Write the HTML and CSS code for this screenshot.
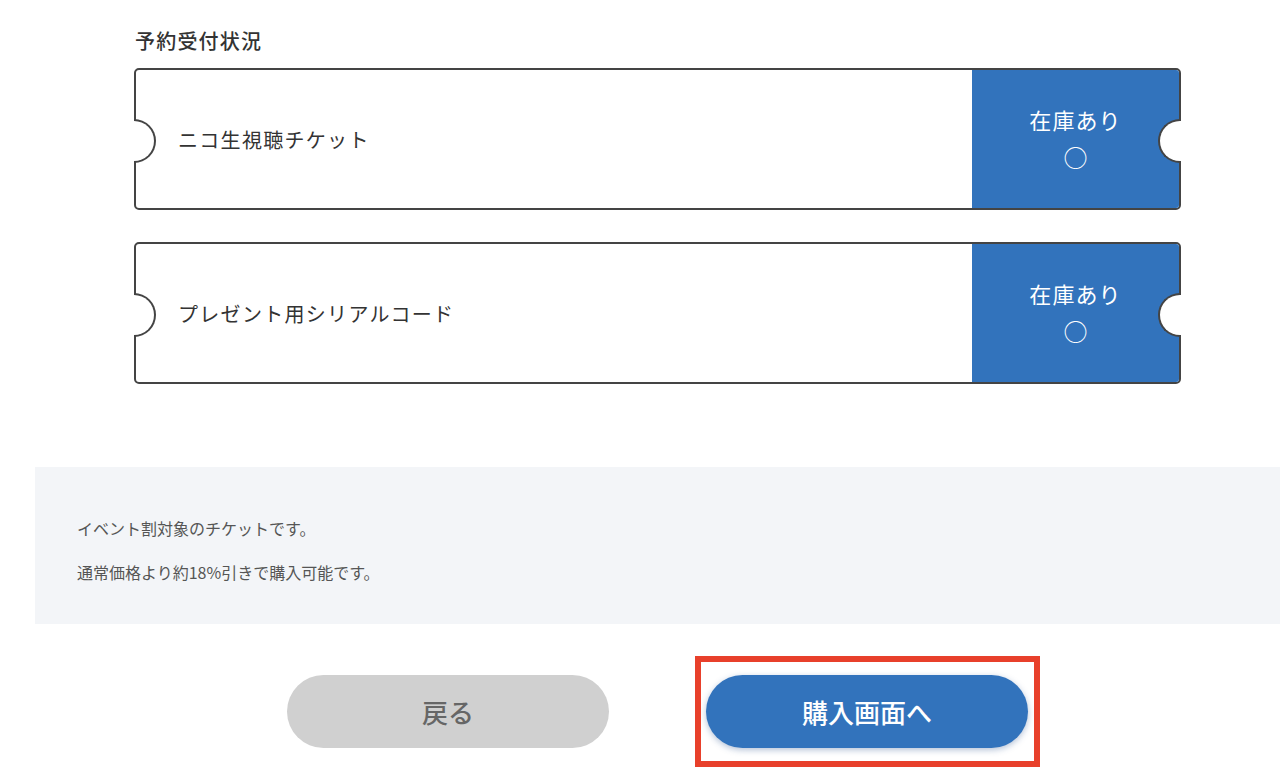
FILE: index.html
```html
<!DOCTYPE html>
<html lang="ja">
<head>
<meta charset="utf-8">
<title>予約受付状況</title>
<link rel="stylesheet" href="styles.css">
</head>
<body>
<div class="page">
  <section class="status">
    <h2 class="status-title">予約受付状況</h2>
    <div class="ticket">
      <div class="ticket-name">ニコ生視聴チケット</div>
      <div class="ticket-stock">
        <span class="stock-label">在庫あり</span>
        <span class="stock-mark">○</span>
      </div>
    </div>
    <div class="ticket">
      <div class="ticket-name">プレゼント用シリアルコード</div>
      <div class="ticket-stock">
        <span class="stock-label">在庫あり</span>
        <span class="stock-mark">○</span>
      </div>
    </div>
  </section>
  <section class="notice">
    <p>イベント割対象のチケットです。</p>
    <p>通常価格より約18%引きで購入可能です。</p>
  </section>
  <div class="actions">
    <button class="btn btn-back" type="button">戻る</button>
    <button class="btn btn-buy" type="button">購入画面へ</button>
  </div>
</div>
</body>
</html>
```

FILE: styles.css
```css
* {
  box-sizing: border-box;
}

html, body {
  margin: 0;
  padding: 0;
  background: #ffffff;
}

body {
  font-family: "Noto Sans CJK JP", "Noto Sans", sans-serif;
  color: #333333;
}

.page {
  margin-left: 35px;
  width: 1245px;
}

.status {
  width: 1047px;
  margin: 0 auto 83px;
  padding-top: 27px;
}

.status-title {
  margin: 0 0 13px 1px;
  font-size: 20px;
  line-height: 28px;
  font-weight: 500;
  letter-spacing: 0.06em;
  color: #333333;
}

.ticket {
  position: relative;
  display: flex;
  height: 142px;
  border: 2px solid #444444;
  border-radius: 5px;
  margin-bottom: 32px;
}

.ticket:last-child {
  margin-bottom: 0;
}

.ticket::before {
  content: "";
  position: absolute;
  left: -2px;
  top: 50%;
  width: 20px;
  height: 40px;
  margin-top: -20px;
  background: #ffffff;
  border: 2px solid #444444;
  border-left: none;
  border-radius: 0 22px 22px 0;
}

.ticket::after {
  content: "";
  position: absolute;
  right: -2px;
  top: 50%;
  width: 21px;
  height: 40px;
  margin-top: -20px;
  background: #ffffff;
  border: 2px solid #444444;
  border-right: none;
  border-radius: 22px 0 0 22px;
}

.ticket-name {
  flex: 1;
  display: flex;
  align-items: center;
  padding-left: 42px;
  font-size: 20px;
  letter-spacing: 0.065em;
  color: #333333;
}

.ticket-stock {
  width: 207px;
  display: flex;
  flex-direction: column;
  align-items: center;
  justify-content: center;
  gap: 6px;
  padding-bottom: 2px;
  background: #3273bc;
  color: #ffffff;
  border-radius: 0 3px 3px 0;
}

.stock-label {
  font-size: 22px;
  line-height: 32px;
  letter-spacing: 0.05em;
}

.stock-mark {
  font-size: 24px;
  line-height: 32px;
}

.notice {
  background: #f3f5f8;
  padding: 49px 42px 39px;
}

.notice p {
  margin: 0;
  font-size: 16px;
  line-height: 25px;
  color: #555555;
}

.notice p + p {
  margin-top: 19px;
}

.actions {
  display: flex;
  justify-content: center;
  gap: 97px;
  padding: 51px 0 20px;
}

.btn {
  width: 322px;
  height: 73px;
  border: none;
  border-radius: 37px;
  font-family: "Noto Sans CJK JP", "Noto Sans", sans-serif;
  font-size: 26px;
  font-weight: 500;
  cursor: pointer;
}

.btn-back {
  background: #d0d0d0;
  color: #666666;
}

.btn-buy {
  position: relative;
  background: #3273bc;
  color: #ffffff;
  box-shadow: 0 2px 6px rgba(40, 80, 140, 0.35);
}

.btn-buy::after {
  content: "";
  position: absolute;
  top: -19px;
  bottom: -19px;
  left: -11px;
  right: -12px;
  border: 6px solid #e8402b;
  pointer-events: none;
}
```
